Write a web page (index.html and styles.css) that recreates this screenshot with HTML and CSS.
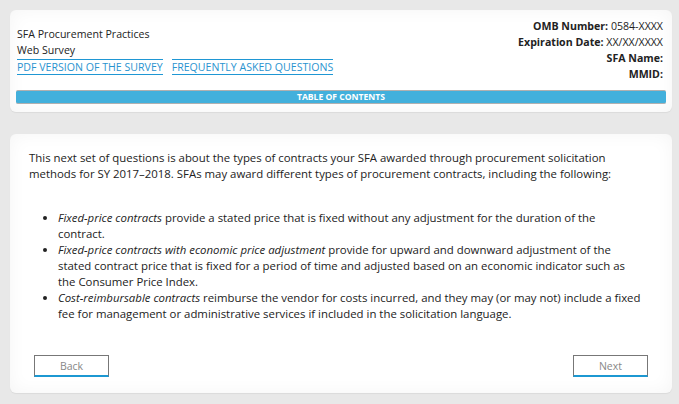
FILE: index.html
```html
<!doctype html>
<html>
<head>
    <meta charset="utf-8">
    <meta name="viewport" content="width=device-width, initial-scale=1.0">
    <title>SFA Procurement Practices Web Survey</title>
    <link rel="stylesheet" href="styles.css">
</head>
<body>
    <div class="card header">
        <div class="headrow">
            <div class="title">
                <p>SFA Procurement Practices</p>
                <p>Web Survey</p>
                <div class="links">
                    <a href="#">PDF VERSION OF THE SURVEY</a>
                    <a href="#">FREQUENTLY ASKED QUESTIONS</a>
                </div>
            </div>
            <div class="info">
                <p><b>OMB Number:</b> 0584-XXXX</p>
                <p><b>Expiration Date:</b> XX/XX/XXXX</p>
                <p><b>SFA Name:</b></p>
                <p><b>MMID:</b></p>
            </div>
        </div>
        <div class="toc">TABLE OF CONTENTS</div>
    </div>

    <div class="card main">
        <p class="intro">This next set of questions is about the types of contracts your SFA awarded through procurement solicitation methods for SY 2017&ndash;2018. SFAs may award different types of procurement contracts, including the following:</p>
        <ul>
            <li><i>Fixed-price contracts</i> provide a stated price that is fixed without any adjustment for the duration of the contract.</li>
            <li><i>Fixed-price contracts with economic price adjustment</i> provide for upward and downward adjustment of the stated contract price that is fixed for a period of time and adjusted based on an economic indicator such as the Consumer Price Index.</li>
            <li><i>Cost-reimbursable contracts</i> reimburse the vendor for costs incurred, and they may (or may not) include a fixed fee for management or administrative services if included in the solicitation language.</li>
        </ul>
        <div class="nav">
            <button class="navbut">Back</button>
            <button class="navbut">Next</button>
        </div>
    </div>
</body>
</html>
```

FILE: styles.css
```css
html, body {
    margin: 0;
    padding: 0;
}
body {
    background-color: #e8e8e8;
    font-family: "Open Sans", sans-serif;
    font-size: 11.4px;
    color: #222;
    padding: 10px 7px 12px 10px;
}
p {
    margin: 0;
    line-height: 16px;
}
.card {
    background-color: #fff;
    border-radius: 6px;
    box-shadow: inset 0 0 18px rgba(0, 0, 0, 0.045), 0 1px 1px rgba(0, 0, 0, 0.06);
}
.header {
    padding: 8px 9px 8px 7px;
    font-size: 10.6px;
}
.headrow {
    display: flex;
    justify-content: space-between;
    align-items: center;
}
.title p {
    line-height: 16.5px;
}
.links {
    display: flex;
    gap: 9px;
}
.links a {
    color: #2a93cf;
    text-decoration: none;
    line-height: 14px;
    border-top: 1px solid #1f97d4;
    border-bottom: 1px solid #1f97d4;
}
.info {
    text-align: right;
}
.info b {
    font-weight: 700;
}
.toc {
    margin: 8px -3px 0 -1px;
    height: 12px;
    background-color: #42b0dc;
    border-top: 1px solid #b0b0b0;
    border-bottom: 1px solid #b0b0b0;
    border-radius: 2px;
    color: #fff;
    font-size: 8.6px;
    font-weight: 700;
    line-height: 12px;
    text-align: center;
}
.main {
    margin-top: 22px;
    padding: 16px 19px 16px 19px;
}
.intro {
    margin-bottom: 28px;
}
ul {
    margin: 0;
    padding-left: 29px;
    padding-right: 10px;
}
li {
    line-height: 16px;
}
.nav {
    display: flex;
    justify-content: space-between;
    margin-top: 33px;
    padding: 0 5px 0 5px;
}
.navbut {
    width: 75px;
    height: 22px;
    background-color: #fff;
    border: 1px solid #777;
    border-bottom: 2px solid #1c98d2;
    color: #888;
    font-family: "Open Sans", sans-serif;
    font-size: 10.5px;
}
```
